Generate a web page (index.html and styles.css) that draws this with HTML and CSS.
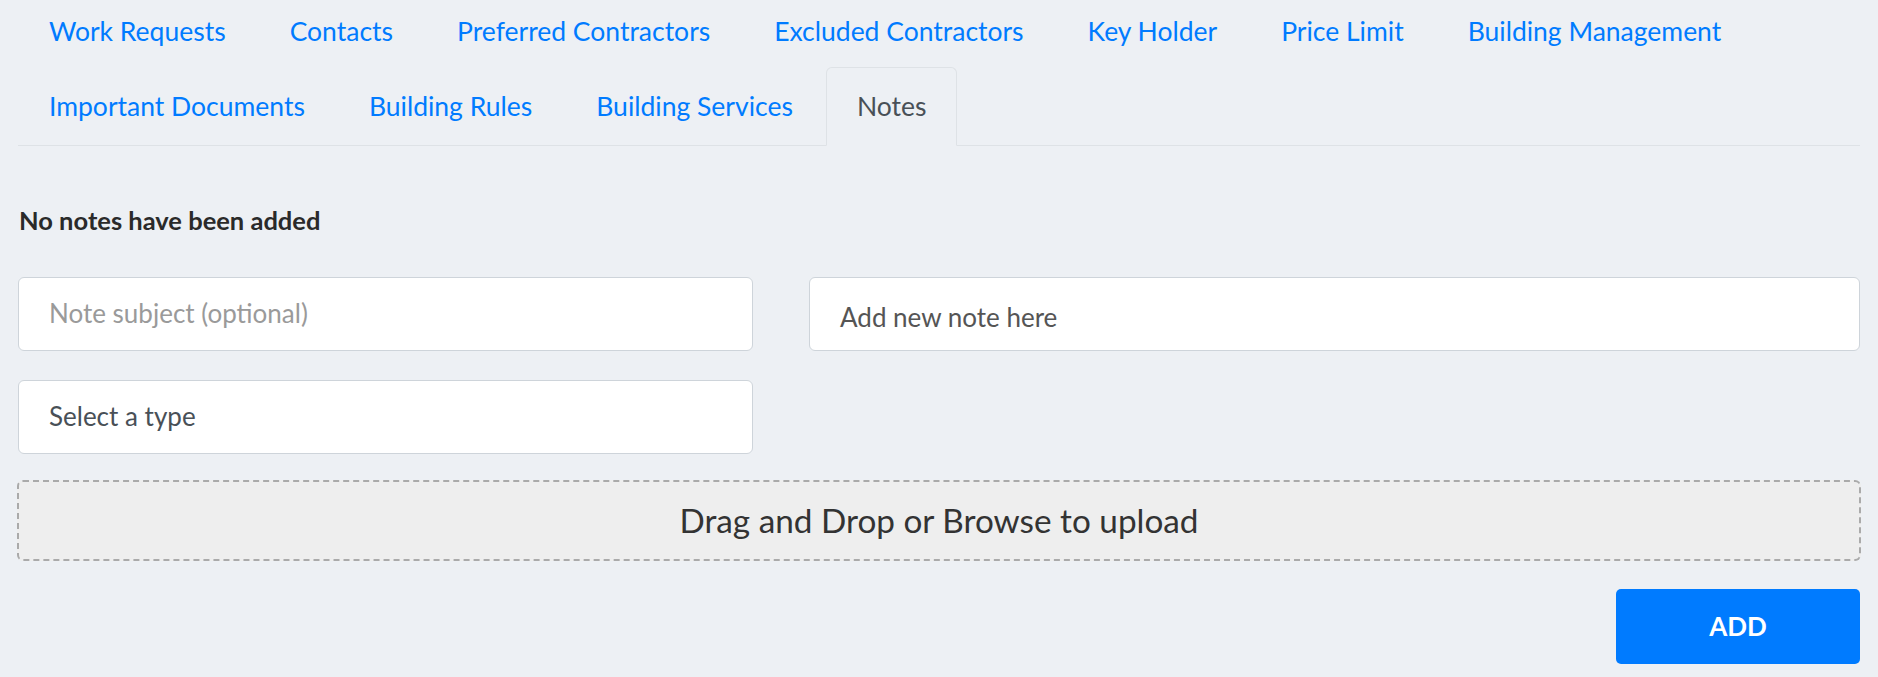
FILE: index.html
```html
<!DOCTYPE html>
<html lang="en">
<head>
    <meta charset="UTF-8">
    <meta name="viewport" content="width=device-width, initial-scale=1.0">
    <title>Building - Notes</title>
    <link rel="stylesheet" href="styles.css">
</head>
<body>

    <div class="page">

        <!-- building tabs -->
        <ul class="nav-tabs">
            <li class="nav-item"><a class="nav-link" href="#">Work Requests</a></li>
            <li class="nav-item"><a class="nav-link" href="#">Contacts</a></li>
            <li class="nav-item"><a class="nav-link" href="#">Preferred Contractors</a></li>
            <li class="nav-item"><a class="nav-link" href="#">Excluded Contractors</a></li>
            <li class="nav-item"><a class="nav-link" href="#">Key Holder</a></li>
            <li class="nav-item"><a class="nav-link" href="#">Price Limit</a></li>
            <li class="nav-item"><a class="nav-link" href="#">Building Management</a></li>
            <li class="nav-item"><a class="nav-link" href="#">Important Documents</a></li>
            <li class="nav-item"><a class="nav-link" href="#">Building Rules</a></li>
            <li class="nav-item"><a class="nav-link" href="#">Building Services</a></li>
            <li class="nav-item"><a class="nav-link active" href="#">Notes</a></li>
        </ul>

        <!-- notes tab -->
        <div class="tab-content">
            <h5 class="empty-notes">No notes have been added</h5>

            <form class="note-form" onsubmit="return false;">
                <div class="note-fields">
                    <div class="note-meta">
                        <input type="text" class="form-control" placeholder="Note subject (optional)">
                        <select class="form-control">
                            <option>Select a type</option>
                            <option>General</option>
                            <option>Access</option>
                            <option>Maintenance</option>
                        </select>
                    </div>
                    <div class="note-body">
                        <textarea class="form-control note-text" rows="1" placeholder="Add new note here"></textarea>
                    </div>
                </div>

                <div class="dropzone">Drag and Drop or Browse to upload</div>

                <div class="form-actions">
                    <button type="submit" class="btn-add">ADD</button>
                </div>
            </form>
        </div>

    </div>

</body>
</html>
```

FILE: styles.css
```css
/* base */
body {
    font-family: 'Lato', 'Open Sans', sans-serif;
    margin: 0;
    padding: 0;
    background-color: #edf0f4;
    color: #212529;
}

.page {
    padding: 0 18px 13px;
}

/* tabs */
.nav-tabs {
    display: flex;
    flex-wrap: wrap;
    list-style: none;
    margin: -5px 0 0;
    padding: 0;
    border-bottom: 1px solid #dee2e6;
}

.nav-item {
    margin-top: -3px;
    margin-right: 2px;
}

.nav-link {
    display: block;
    padding: 21px 30px 22px;
    font-size: 26.5px;
    line-height: 34px;
    color: #007bff;
    text-decoration: none;
    border: 1px solid transparent;
    border-radius: 6px 6px 0 0;
    margin-bottom: -1px;
}

.nav-link.active {
    color: #495057;
    background-color: #edf0f4;
    border-color: #dee2e6 #dee2e6 transparent;
}

/* notes */
.empty-notes {
    margin: 59px 0 41px 1px;
    font-size: 25.5px;
    font-weight: 700;
    line-height: 1.2;
    color: #2a2a2a;
}

.note-fields {
    display: grid;
    grid-template-columns: 735px 1fr;
    column-gap: 56px;
    align-items: start;
}

.note-meta {
    display: flex;
    flex-direction: column;
    gap: 29px;
}

.form-control {
    display: block;
    width: 100%;
    box-sizing: border-box;
    padding: 17px 30px 19px;
    font-family: inherit;
    font-size: 26px;
    line-height: 36px;
    color: #495057;
    background-color: #fff;
    border: 1px solid #ced4da;
    border-radius: 6px;
    outline: none;
}

.form-control::placeholder {
    color: #9a9a9a;
}

select.form-control {
    appearance: none;
    -webkit-appearance: none;
    height: 74px;
}

.note-text {
    resize: none;
    height: 74px;
    padding: 21px 30px 15px;
    overflow: hidden;
}

.note-text::placeholder {
    color: #555;
}

/* upload box */
.dropzone {
    margin: 26px -1px 0;
    padding: 14px 0 15px;
    font-size: 33.3px;
    line-height: 48px;
    text-align: center;
    color: #333;
    background-color: #eee;
    border: 2px dashed #aaa;
    border-radius: 6px;
}

.form-actions {
    display: flex;
    justify-content: flex-end;
    margin-top: 28px;
}

.btn-add {
    width: 244px;
    padding: 19px 0 20px;
    font-family: inherit;
    font-size: 26px;
    font-weight: 700;
    line-height: 36px;
    color: #fff;
    background-color: #007bff;
    border: none;
    border-radius: 5px;
    cursor: pointer;
}
```
